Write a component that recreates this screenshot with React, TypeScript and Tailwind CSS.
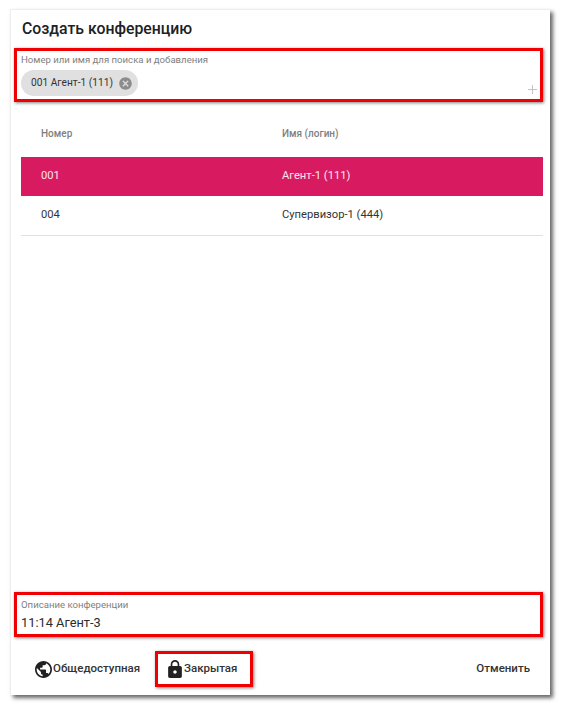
import React from "react";

const rows = [
  { number: "001", name: "Агент-1 (111)", selected: true },
  { number: "004", name: "Супервизор-1 (444)", selected: false },
];

function App() {
  return (
    <div className="w-[561px] h-[706px] bg-white pl-[10px] pt-[9px] font-['Roboto',sans-serif]">
      <div className="w-[540px] h-[686px] bg-white flex flex-col border-t border-l border-[#eeeeee] shadow-[3px_3px_4px_rgba(0,0,0,0.6)]">
        <h1 className="h-[38px] pl-[11px] pt-[8px] text-[15.8px] leading-[22px] font-medium text-[#212121]">
          Создать конференцию
        </h1>
        <div className="relative ml-[3px] w-[529px] h-[54px] border-[3px] border-[#f00000] shadow-[1px_1px_3px_rgba(0,0,0,0.5)] pl-[4px] pt-[2px]">
          <p className="text-[9.6px] leading-[13px] text-[#808080]">
            Номер или имя для поиска и добавления
          </p>
          <div className="mt-[4px] inline-flex items-center h-[26px] w-[117px] rounded-full bg-[#e0e0e0] pl-[10px] text-[10.2px] whitespace-nowrap text-[#333333]">
            001 Агент-1 (111)
            <svg viewBox="0 0 24 24" className="ml-[5px] w-[15px] h-[15px] fill-[#8c8c8c]">
              <path d="M12 2C6.47 2 2 6.47 2 12s4.47 10 10 10 10-4.47 10-10S17.53 2 12 2zm5 13.59L15.59 17 12 13.41 8.41 17 7 15.59 10.59 12 7 8.41 8.41 7 12 10.59 15.59 7 17 8.41 13.41 12 17 15.59z" />
            </svg>
          </div>
          <svg viewBox="0 0 9 9" className="absolute right-[3px] bottom-[5px] w-[9px] h-[9px] stroke-[#c4c4c4]">
            <path d="M4.5 0v9M0 4.5h9" />
          </svg>
        </div>
        <div className="ml-[10px] w-[522px] mt-[7px]">
          <div className="flex h-[48px] items-center pl-[20px] text-[10px] font-medium text-[#7f7f7f]">
            <span className="w-[241px]">Номер</span>
            <span>Имя (логин)</span>
          </div>
          {rows.map((row) => (
            <div
              key={row.number}
              className={
                row.selected
                  ? "flex h-[39px] items-center pl-[20px] text-[11.2px] pb-[1px] bg-[#d81b60] text-[#fbe4ec]"
                  : "flex h-[40px] items-center pl-[20px] text-[11.2px] pb-[1px] text-[#333333] border-b border-[#e0e0e0]"
              }
            >
              <span className="w-[241px]">{row.number}</span>
              <span>{row.name}</span>
            </div>
          ))}
        </div>
        <div className="flex-1" />
        <div className="ml-[3px] w-[529px] h-[45px] border-[3px] border-[#f00000] shadow-[1px_1px_3px_rgba(0,0,0,0.5)] pl-[4px] pt-[3px]">
          <p className="text-[9.6px] leading-[13px] text-[#808080]">Описание конференции</p>
          <p className="mt-[3px] text-[12.8px] leading-[17px] text-[#2b2b2b]">11:14 Агент-3</p>
        </div>
        <div className="h-[58px] flex items-start pt-[14px] text-[11.5px] font-medium text-[#333333]">
          <div className="ml-[24px] flex items-center h-[36px] w-[120px]">
            <svg viewBox="2 2 20 20" className="w-[17px] h-[17px] fill-[#212121] mr-[1px]">
              <path d="M12 2C6.48 2 2 6.48 2 12s4.48 10 10 10 10-4.48 10-10S17.52 2 12 2zm-1 17.93c-3.95-.49-7-3.85-7-7.93 0-.62.08-1.21.21-1.79L9 15v1c0 1.1.9 2 2 2v1.93zm6.9-2.54c-.26-.81-1-1.39-1.9-1.39h-1v-3c0-.55-.45-1-1-1H8v-2h2c.55 0 1-.45 1-1V7h2c1.1 0 2-.9 2-2v-.41c2.93 1.19 5 4.06 5 7.41 0 2.08-.8 3.97-2.1 5.39z" />
            </svg>
            Общедоступная
          </div>
          <div className="flex items-center h-[36px] w-[98px] border-[3px] border-[#f00000] shadow-[1px_1px_3px_rgba(0,0,0,0.5)] pl-[10px]">
            <svg viewBox="4 1 16 21" className="w-[14px] h-[18px] fill-[#212121] mr-[2px]">
              <path d="M18 8h-1V6c0-2.76-2.24-5-5-5S7 3.24 7 6v2H6c-1.1 0-2 .9-2 2v10c0 1.1.9 2 2 2h12c1.1 0 2-.9 2-2V10c0-1.1-.9-2-2-2zm-6 9c-1.1 0-2-.9-2-2s.9-2 2-2 2 .9 2 2-.9 2-2 2zm3.1-9H8.9V6c0-1.71 1.39-3.1 3.1-3.1 1.71 0 3.1 1.39 3.1 3.1v2z" />
            </svg>
            Закрытая
          </div>
          <div className="ml-auto mr-[20px] h-[36px] flex items-center">Отменить</div>
        </div>
      </div>
    </div>
  );
}

export default App;
